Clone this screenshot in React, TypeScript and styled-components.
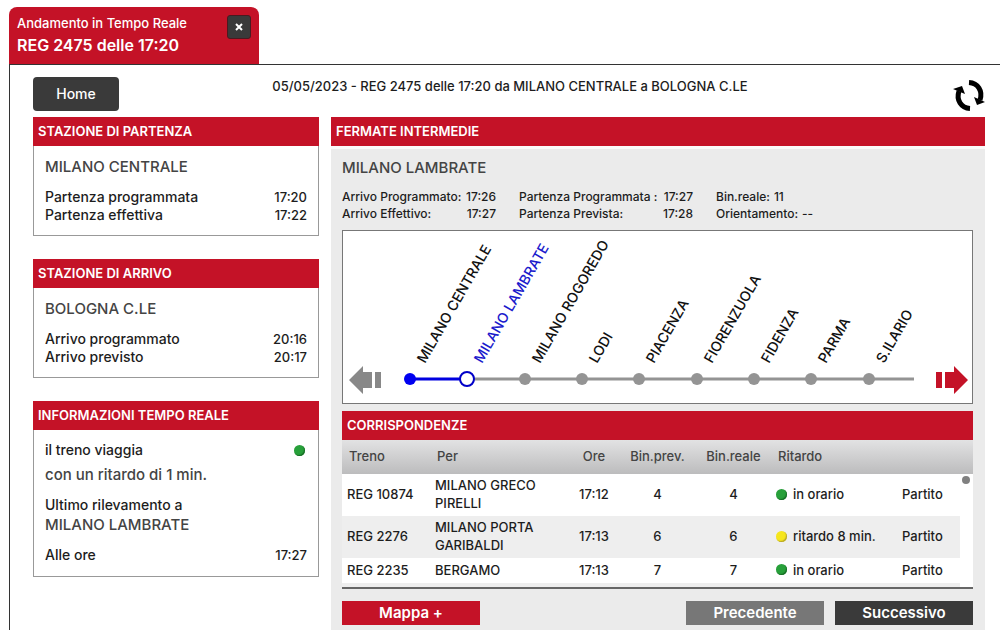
import React from "react";
import styled, { createGlobalStyle, css } from "styled-components";

const GlobalStyle = createGlobalStyle`
  *, *::before, *::after { box-sizing: border-box; }
  body {
    margin: 0;
    background: #fff;
    color: #1d1d1d;
    font-family: Inter, "Liberation Sans", sans-serif;
    font-size: 14px;
    font-weight: 500;
    line-height: 18px;
  }
  h1, h2, h3, p, dl, dd { margin: 0; font: inherit; }
  button { font: inherit; border: 0; padding: 0; cursor: pointer; }
`;

const RED = "#c41227";

const Page = styled.div`
  display: flex;
  flex-direction: column;
  min-height: 100vh;
  padding: 7px 0 0 9px;
`;

const Tab = styled.header`
  display: flex;
  justify-content: space-between;
  align-items: flex-start;
  width: 250px;
  height: 57px;
  padding: 7px 8px 0;
  border-radius: 8px 8px 0 0;
  background: ${RED};
  color: #fff;
`;

const TabKind = styled.p`
  font-size: 13px;
`;

const TabTitle = styled.h1`
  font-size: 16px;
  line-height: 26px;
  font-weight: 600;
`;

const CloseButton = styled.button`
  display: grid;
  place-items: center;
  width: 24px;
  height: 24px;
  margin-top: 1px;
  border: 1px solid #4a1a20;
  border-radius: 3px;
  background: #3a3a3a;
`;

const Frame = styled.main`
  flex: 1;
  display: flex;
  flex-direction: column;
  padding: 12px 15px 0 23px;
  border-top: 1px solid #333;
  border-left: 1px solid #333;
`;

const TopBar = styled.div`
  display: flex;
  align-items: flex-start;
  height: 40px;
`;

const HomeButton = styled.button`
  width: 86px;
  height: 34px;
  border-radius: 4px;
  background: #3a3a3a;
  color: #fff;
`;

const Route = styled.p`
  flex: 1;
  padding-right: 50px;
  font-size: 13px;
  text-align: center;
`;

const RefreshButton = styled.button`
  width: 34px;
  height: 34px;
  margin-top: 1px;
  background: none;
`;

const Columns = styled.div`
  flex: 1;
  display: flex;
  gap: 12px;
`;

const Side = styled.aside`
  display: flex;
  flex-direction: column;
  gap: 23px;
  width: 286px;
  flex: none;
`;

const Bar = styled.h2`
  height: 29px;
  padding-left: 5px;
  background: ${RED};
  color: #fff;
  font-size: 13px;
  font-weight: 600;
  line-height: 28px;
`;

const CardBody = styled.div`
  padding: 12px 11px;
  border: 1px solid #999;
  border-top: 0;
`;

const StationBody = styled(CardBody)`
  padding-bottom: 11px;
`;

const LiveBody = styled(CardBody)`
  padding-top: 11px;
`;

const Place = styled.p<{ $top?: number; $gap?: number }>`
  color: #444;
  font-size: 15px;
  margin-top: ${({ $top = 0 }) => $top}px;
  margin-bottom: ${({ $gap = 12 }) => $gap}px;
`;

const Line = styled.div`
  display: flex;
  justify-content: space-between;
  align-items: center;
`;

const Time = styled.span`
  font-size: 13px;
`;

const Dot = styled.span<{ $late?: boolean }>`
  flex: none;
  width: 11px;
  height: 11px;
  border-radius: 50%;
  background: ${({ $late }) => ($late ? "#f6e61c" : "#27a03a")};
  box-shadow: inset -1px -1px 1px ${({ $late }) => ($late ? "#b5a52a" : "#176b25")};
`;

const LiveDot = styled(Dot)`
  margin-right: 2px;
`;

const Panel = styled.section`
  flex: 1;
  min-width: 0;
  background: #ebebeb;
`;

const PanelBar = styled(Bar)`
  box-shadow: 0 3px 0 #fafafa;
`;

const PanelBody = styled.div`
  padding: 13px 12px 12px 11px;
`;

const StopTimes = styled.dl`
  display: flex;
  gap: 23px;
  margin-bottom: 8px;
  font-size: 12px;
  line-height: 17px;
`;

const TimeGroup = styled.div<{ $width: number }>`
  width: ${({ $width }) => $width}px;
`;

const TimeRow = styled.div<{ $inline?: boolean }>`
  display: flex;
  gap: 4px;
  justify-content: ${({ $inline }) => ($inline ? "flex-start" : "space-between")};
`;

const RouteMap = styled.div`
  display: flex;
  align-items: flex-end;
  padding: 0 4px 0 6px;
  margin-bottom: 7px;
  border: 1px solid #777;
  background: #fff;
`;

const ArrowButton = styled.button`
  flex: none;
  width: 33px;
  height: 28px;
  margin-bottom: 9px;
  background: none;
`;

const MapDrawing = styled.svg`
  flex: 1;
  min-width: 0;
  display: block;
  font-size: 14px;
`;

const Clip = styled.div`
  height: 149px;
  overflow: hidden;
  border-bottom: 2px solid #666;
`;

const Trains = styled.table`
  width: 100%;
  table-layout: fixed;
  border-collapse: collapse;
  font-size: 13px;
`;

const Head = styled.tr`
  height: 34px;
  background: linear-gradient(#e2e2e3, #bcbcbd);
  color: #444;
`;

const Row = styled.tr<{ $tall?: boolean }>`
  height: ${({ $tall }) => ($tall ? 42 : 25)}px;
  background: #fff;
  &:nth-child(even) { background: #eee; }
`;

const cell = css<{ $center?: boolean }>`
  padding: 0 5px 2px;
  font-weight: 500;
  text-align: ${({ $center }) => ($center ? "center" : "left")};
  white-space: nowrap;
`;

const Th = styled.th<{ $center?: boolean }>`
  ${cell}
  padding: 0 7px 2px;
`;

const Td = styled.td<{ $center?: boolean }>`
  ${cell}
`;

const Destination = styled(Td)`
  padding-right: 20px;
  white-space: normal;
`;

const ScrollCell = styled.td`
  padding: 2px 0 0 2px;
  background: #fff;
  vertical-align: top;
`;

const Thumb = styled.span`
  display: block;
  width: 8px;
  height: 8px;
  border-radius: 50%;
  background: #808080;
`;

const Status = styled.span`
  display: flex;
  align-items: center;
  gap: 6px;
`;

const Actions = styled.div`
  display: flex;
  gap: 11px;
  margin-top: 12px;
`;

const Action = styled.button<{ $tone: string; $push?: boolean }>`
  width: 138px;
  height: 24px;
  margin-left: ${({ $push }) => ($push ? "auto" : "0")};
  background: ${({ $tone }) => $tone};
  color: #fff;
  font-size: 15px;
  font-weight: 600;
`;

const stops = [
  "MILANO CENTRALE",
  "MILANO LAMBRATE",
  "MILANO ROGOREDO",
  "LODI",
  "PIACENZA",
  "FIORENZUOLA",
  "FIDENZA",
  "PARMA",
  "S.ILARIO",
];
const current = 1;
const stopX = (i: number) => 28 + Math.round((i * 172) / 3);

const trains = [
  { train: "REG 10874", to: "MILANO GRECO PIRELLI", time: "17:12", track: "4", delay: 0, tall: true },
  { train: "REG 2276", to: "MILANO PORTA GARIBALDI", time: "17:13", track: "6", delay: 8, tall: true },
  { train: "REG 2235", to: "BERGAMO", time: "17:13", track: "7", delay: 0, tall: false },
];

function StationCard(props: { title: string; place: string; rows: [string, string][] }) {
  return (
    <section>
      <Bar>{props.title}</Bar>
      <StationBody>
        <Place>{props.place}</Place>
        {props.rows.map(([label, time]) => (
          <Line key={label}>
            <span>{label}</span>
            <Time>{time}</Time>
          </Line>
        ))}
      </StationBody>
    </section>
  );
}

function StopMap() {
  return (
    <RouteMap>
      <ArrowButton aria-label="Fermate precedenti">
        <svg width="33" height="28" viewBox="0 0 33 28" fill="#888">
          <path d="M0 14 14 0V6H23V22H14V28Z M26 6H32V22H26Z" />
        </svg>
      </ArrowButton>
      <MapDrawing viewBox="0 0 553 172">
        <path d={`M${stopX(current)} 148H532`} stroke="#949494" strokeWidth="3" />
        <path d={`M${stopX(0)} 148H${stopX(current)}`} stroke="#0000e0" strokeWidth="3" />
        {stops.map((name, i) => (
          <g key={name}>
            {i === current ? (
              <circle cx={stopX(i)} cy="148" r="7" fill="#fff" stroke="#0000c8" strokeWidth="2" />
            ) : (
              <circle cx={stopX(i)} cy="148" r="6" fill={i < current ? "#0000f0" : "#949494"} />
            )}
            <text
              transform={`translate(${stopX(i) + 15} 133) rotate(-60)`}
              fill={i === current ? "#1a1acc" : "#111"}
            >
              {name}
            </text>
          </g>
        ))}
      </MapDrawing>
      <ArrowButton aria-label="Fermate successive">
        <svg width="33" height="28" viewBox="0 0 33 28" fill={RED}>
          <path d="M33 14 19 0V6H10V22H19V28Z M1 6H7V22H1Z" />
        </svg>
      </ArrowButton>
    </RouteMap>
  );
}

function Connections() {
  return (
    <section>
      <Bar>CORRISPONDENZE</Bar>
      <Clip>
        <Trains>
          <colgroup>
            <col width="88" />
            <col />
            <col width="50" />
            <col width="77" />
            <col width="75" />
            <col width="126" />
            <col width="63" />
            <col width="13" />
          </colgroup>
          <thead>
            <Head>
              <Th>Treno</Th>
              <Th>Per</Th>
              <Th $center>Ore</Th>
              <Th $center>Bin.prev.</Th>
              <Th $center>Bin.reale</Th>
              <Th colSpan={3}>Ritardo</Th>
            </Head>
          </thead>
          <tbody>
            {trains.map((t, i) => (
              <Row key={t.train} $tall={t.tall}>
                <Td>{t.train}</Td>
                <Destination>{t.to}</Destination>
                <Td $center>{t.time}</Td>
                <Td $center>{t.track}</Td>
                <Td $center>{t.track}</Td>
                <Td>
                  <Status>
                    <Dot $late={t.delay > 0} />
                    {t.delay > 0 ? `ritardo ${t.delay} min.` : "in orario"}
                  </Status>
                </Td>
                <Td>Partito</Td>
                {i === 0 && (
                  <ScrollCell rowSpan={4}>
                    <Thumb />
                  </ScrollCell>
                )}
              </Row>
            ))}
            <Row>
              <Td colSpan={7} />
            </Row>
          </tbody>
        </Trains>
      </Clip>
    </section>
  );
}

export default function App() {
  return (
    <>
      <GlobalStyle />
      <Page>
        <Tab>
          <div>
            <TabKind>Andamento in Tempo Reale</TabKind>
            <TabTitle>REG 2475 delle 17:20</TabTitle>
          </div>
          <CloseButton aria-label="Chiudi">
            <svg width="8" height="8" viewBox="0 0 8 8" stroke="#fff" strokeWidth="2">
              <path d="M1 1 7 7M7 1 1 7" />
            </svg>
          </CloseButton>
        </Tab>
        <Frame>
          <TopBar>
            <HomeButton>Home</HomeButton>
            <Route>05/05/2023 - REG 2475 delle 17:20 da MILANO CENTRALE a BOLOGNA C.LE</Route>
            <RefreshButton aria-label="Aggiorna">
              <svg width="34" height="34" viewBox="0 0 34 34">
                <path d="M19 30.5C10 30 5 22 8 13" fill="none" stroke="#000" strokeWidth="5" />
                <path d="M18 4.5C27 5 32 13 29 22" fill="none" stroke="#000" strokeWidth="5" />
                <path d="M2 11 11 8 14 16ZM34 24 26 27 23 19Z" />
              </svg>
            </RefreshButton>
          </TopBar>
          <Columns>
            <Side>
              <StationCard
                title="STAZIONE DI PARTENZA"
                place="MILANO CENTRALE"
                rows={[["Partenza programmata", "17:20"], ["Partenza effettiva", "17:22"]]}
              />
              <StationCard
                title="STAZIONE DI ARRIVO"
                place="BOLOGNA C.LE"
                rows={[["Arrivo programmato", "20:16"], ["Arrivo previsto", "20:17"]]}
              />
              <section>
                <Bar>INFORMAZIONI TEMPO REALE</Bar>
                <LiveBody>
                  <Line>
                    <span>il treno viaggia</span>
                    <LiveDot />
                  </Line>
                  <Place $top={7}>con un ritardo di 1 min.</Place>
                  <p>Ultimo rilevamento a</p>
                  <Place $top={2}>MILANO LAMBRATE</Place>
                  <Line>
                    <span>Alle ore</span>
                    <Time>17:27</Time>
                  </Line>
                </LiveBody>
              </section>
            </Side>
            <Panel>
              <PanelBar>FERMATE INTERMEDIE</PanelBar>
              <PanelBody>
                <Place $gap={11}>MILANO LAMBRATE</Place>
                <StopTimes>
                  <TimeGroup $width={154}>
                    <TimeRow><dt>Arrivo Programmato:</dt><dd>17:26</dd></TimeRow>
                    <TimeRow><dt>Arrivo Effettivo:</dt><dd>17:27</dd></TimeRow>
                  </TimeGroup>
                  <TimeGroup $width={174}>
                    <TimeRow><dt>Partenza Programmata :</dt><dd>17:27</dd></TimeRow>
                    <TimeRow><dt>Partenza Prevista:</dt><dd>17:28</dd></TimeRow>
                  </TimeGroup>
                  <TimeGroup $width={120}>
                    <TimeRow $inline><dt>Bin.reale:</dt><dd>11</dd></TimeRow>
                    <TimeRow $inline><dt>Orientamento:</dt><dd>--</dd></TimeRow>
                  </TimeGroup>
                </StopTimes>
                <StopMap />
                <Connections />
                <Actions>
                  <Action $tone={RED}>Mappa +</Action>
                  <Action $tone="#777" $push>Precedente</Action>
                  <Action $tone="#3a3a3a">Successivo</Action>
                </Actions>
              </PanelBody>
            </Panel>
          </Columns>
        </Frame>
      </Page>
    </>
  );
}
